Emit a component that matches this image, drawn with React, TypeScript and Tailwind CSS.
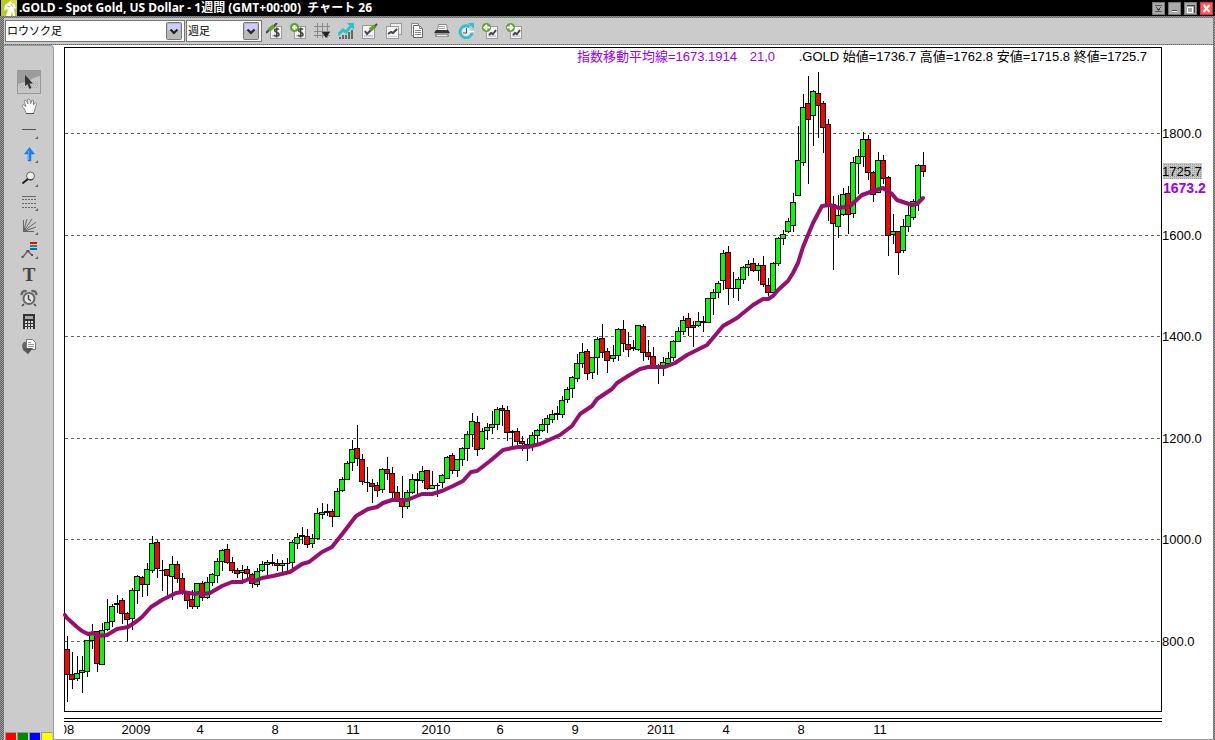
import type { ReactNode } from "react";

type Candle = [high: number, top: number, bottom: number, low: number, kind: "u" | "d"];

const FIRST_X = 67;
const STEP = 5;

// weekly candles, values are chart rows: high, body top, body bottom, low
const CANDLES: Candle[] = [
    [636, 649, 674, 701, "d"], [652, 674, 679, 688, "d"], [656, 673, 678, 680, "u"], [656, 670, 672, 692, "u"],
    [640, 640, 671, 676, "u"], [624, 632, 640, 648, "u"], [631, 631, 663, 671, "d"], [623, 630, 664, 664, "u"],
    [599, 622, 629, 630, "u"], [604, 606, 621, 626, "u"], [595, 603, 604, 612, "u"], [598, 600, 613, 623, "d"],
    [612, 613, 619, 640, "d"], [588, 590, 618, 629, "u"], [575, 576, 590, 603, "u"], [576, 577, 584, 596, "d"],
    [563, 569, 584, 595, "u"], [536, 543, 570, 572, "u"], [540, 542, 568, 577, "d"], [560, 570, 570, 590, "u"],
    [569, 569, 575, 596, "d"], [556, 564, 576, 599, "u"], [561, 564, 578, 582, "d"], [573, 578, 592, 594, "d"],
    [591, 593, 600, 608, "d"], [590, 599, 606, 608, "d"], [583, 583, 606, 608, "u"], [581, 583, 597, 600, "d"],
    [577, 582, 597, 598, "u"], [573, 574, 582, 585, "u"], [558, 561, 575, 582, "u"], [549, 550, 561, 570, "u"],
    [544, 549, 562, 563, "d"], [557, 562, 570, 572, "d"], [568, 570, 573, 577, "d"], [565, 570, 572, 583, "u"],
    [566, 569, 573, 579, "d"], [573, 574, 583, 587, "d"], [568, 571, 584, 586, "u"], [561, 564, 570, 571, "u"],
    [560, 562, 564, 576, "u"], [554, 562, 563, 565, "u"], [559, 563, 565, 570, "d"], [560, 563, 565, 572, "u"],
    [558, 563, 563, 571, "u"], [540, 542, 562, 569, "u"], [533, 537, 543, 548, "u"], [527, 535, 536, 543, "u"],
    [529, 536, 544, 547, "d"], [534, 538, 543, 547, "u"], [508, 513, 538, 539, "u"], [503, 512, 514, 518, "u"],
    [504, 511, 512, 515, "u"], [509, 511, 516, 526, "d"], [488, 491, 516, 516, "u"], [477, 479, 490, 491, "u"],
    [461, 463, 479, 479, "u"], [440, 449, 462, 470, "u"], [425, 448, 458, 465, "d"], [454, 459, 481, 484, "d"],
    [467, 482, 482, 491, "u"], [479, 483, 486, 502, "d"], [482, 485, 490, 496, "d"], [468, 469, 489, 492, "u"],
    [457, 469, 473, 479, "d"], [467, 473, 492, 497, "d"], [486, 492, 501, 501, "d"], [476, 500, 506, 517, "d"],
    [490, 492, 506, 508, "u"], [474, 479, 492, 493, "u"], [473, 479, 480, 494, "u"], [466, 471, 480, 482, "u"],
    [470, 470, 488, 489, "d"], [471, 485, 488, 488, "u"], [483, 485, 485, 496, "u"], [474, 475, 482, 487, "u"],
    [456, 457, 478, 478, "u"], [453, 455, 470, 473, "d"], [459, 459, 470, 476, "u"], [447, 448, 459, 465, "u"],
    [431, 434, 448, 460, "u"], [413, 421, 434, 446, "u"], [416, 422, 449, 455, "d"], [428, 431, 448, 449, "u"],
    [423, 427, 430, 439, "u"], [411, 424, 427, 433, "u"], [407, 409, 424, 429, "u"], [405, 408, 410, 425, "d"],
    [406, 410, 432, 440, "d"], [430, 431, 432, 446, "u"], [428, 431, 441, 445, "d"], [436, 441, 443, 450, "d"],
    [439, 444, 445, 460, "u"], [432, 435, 445, 450, "u"], [429, 430, 435, 444, "u"], [419, 424, 430, 431, "u"],
    [415, 418, 424, 432, "u"], [410, 414, 419, 422, "u"], [406, 413, 414, 419, "u"], [396, 400, 414, 417, "u"],
    [387, 389, 399, 402, "u"], [376, 377, 388, 397, "u"], [354, 363, 378, 381, "u"], [343, 352, 363, 367, "u"],
    [349, 351, 373, 379, "d"], [357, 357, 372, 378, "u"], [337, 339, 357, 374, "u"], [324, 338, 352, 357, "d"],
    [348, 351, 360, 372, "d"], [345, 355, 358, 361, "u"], [328, 329, 355, 360, "u"], [320, 329, 343, 351, "d"],
    [332, 344, 349, 356, "d"], [340, 347, 348, 350, "u"], [325, 325, 349, 350, "u"], [324, 326, 352, 360, "d"],
    [340, 352, 356, 359, "d"], [347, 356, 366, 366, "d"], [364, 365, 366, 383, "u"], [357, 362, 365, 375, "u"],
    [352, 358, 363, 364, "u"], [340, 341, 357, 360, "u"], [327, 331, 341, 341, "u"], [316, 320, 331, 334, "u"],
    [313, 318, 327, 335, "d"], [321, 325, 327, 346, "d"], [312, 321, 325, 326, "u"], [316, 321, 322, 331, "u"],
    [298, 298, 322, 322, "u"], [289, 292, 298, 314, "u"], [281, 283, 292, 297, "u"], [250, 253, 280, 289, "u"],
    [246, 252, 288, 304, "d"], [272, 288, 288, 297, "u"], [277, 279, 288, 300, "u"], [266, 267, 279, 283, "u"],
    [260, 264, 267, 275, "u"], [258, 263, 270, 271, "d"], [263, 265, 270, 280, "u"], [256, 265, 284, 286, "d"],
    [278, 285, 292, 295, "d"], [262, 263, 292, 292, "u"], [237, 238, 263, 265, "u"], [230, 234, 238, 244, "u"],
    [218, 221, 231, 232, "u"], [193, 202, 225, 231, "u"], [126, 160, 195, 195, "u"], [94, 107, 162, 165, "u"],
    [76, 103, 119, 183, "d"], [90, 91, 115, 145, "u"], [72, 93, 105, 137, "d"], [101, 103, 127, 152, "d"],
    [119, 124, 204, 220, "d"], [196, 204, 223, 269, "d"], [195, 215, 226, 237, "u"], [188, 194, 214, 215, "u"],
    [186, 193, 214, 233, "d"], [157, 162, 213, 217, "u"], [149, 156, 163, 193, "u"], [132, 139, 156, 166, "u"],
    [135, 139, 172, 179, "d"], [171, 172, 194, 201, "d"], [152, 160, 192, 192, "u"], [155, 160, 178, 183, "d"],
    [176, 177, 235, 255, "d"], [214, 231, 234, 243, "u"], [231, 231, 252, 274, "d"], [219, 226, 250, 252, "u"],
    [206, 215, 226, 231, "u"], [199, 201, 217, 219, "u"], [164, 165, 202, 210, "u"], [152, 165, 171, 176, "d"],
];

const EMA =
    "65,615 67,618 77,627 82,631 88,634 93,633 98,636 107,635 117,629 128,627 137,621 142,617 151,607 162,600 176,593 183,592 195,594 198,593 203,594 210,593 222,586 232,582 242,582 249,579 255,581 262,578 273,576 290,572 302,564 309,562 322,552 332,547 343,533 356,516 368,509 377,507 383,503 392,500 407,500 412,498 422,494 432,494 442,491 453,486 463,481 471,472 477,471 490,461 503,450 512,448 518,447 528,447 540,444 560,435 572,426 580,414 592,406 597,399 612,389 617,383 628,376 640,369 648,367 665,367 675,363 687,355 707,345 718,332 723,326 737,318 753,305 763,299 768,299 773,296 778,290 788,281 793,273 798,263 803,247 813,223 822,206 830,205 839,208 850,206 862,195 873,191 883,188 892,194 897,200 912,205 917,204 923,198";

const PRICES = [
    { label: "1800.0", y: 133 },
    { label: "1600.0", y: 235 },
    { label: "1400.0", y: 336 },
    { label: "1200.0", y: 438 },
    { label: "1000.0", y: 539 },
    { label: "800.0", y: 641 },
];

const DATES = [
    { label: "08", x: 67 },
    { label: "2009", x: 136 },
    { label: "4", x: 200 },
    { label: "8", x: 275 },
    { label: "11", x: 353 },
    { label: "2010", x: 436 },
    { label: "6", x: 500 },
    { label: "9", x: 575 },
    { label: "2011", x: 661 },
    { label: "4", x: 726 },
    { label: "8", x: 801 },
    { label: "11", x: 880 },
];

// the time scale skips one extra pixel after candle 108
const candleX = (i: number) => FIRST_X + i * STEP + (i > 108 ? 1 : 0);

const Chart = () => (
    <svg
        viewBox="54 45 1159 694"
        preserveAspectRatio="xMinYMin meet"
        className="block h-full w-full font-['Liberation_Sans','Noto_Sans_CJK_JP',sans-serif] text-[13px]"
        role="img"
        aria-label=".GOLD チャート"
    >
        <defs>
            <clipPath id="time-axis">
                <rect x="64" y="722" width="1098" height="18" />
            </clipPath>
            <pattern id="dither" width="2" height="2" patternUnits="userSpaceOnUse">
                <rect width="2" height="2" fill="#c8c8c8" />
                <rect width="1" height="1" fill="#999" />
            </pattern>
        </defs>

        <g shapeRendering="crispEdges" fill="none" stroke="#000">
            {PRICES.map(({ label, y }) => (
                <path key={label} d={`M65 ${y}.5H1161`} stroke="#666" strokeDasharray="3 3" />
            ))}
            <rect x="64.5" y="47.5" width="1097" height="664" />
            <path d="M64 718.5H1162M64 721.5H1162" />
            {CANDLES.map(([high, top, bottom, low, kind], i) => {
                const x = candleX(i);
                return (
                    <g key={i}>
                        <path d={`M${x}.5 ${high}V${low + 1}`} />
                        {bottom - top < 2 ? (
                            <rect x={x - 3} y={top} width="6" height={bottom - top + 1} fill="#000" stroke="none" />
                        ) : (
                            <rect
                                x={Math.max(x - 2.5, 64.5)}
                                y={top + 0.5}
                                width="5"
                                height={bottom - top}
                                fill={kind === "u" ? "#00ff00" : "#ff0000"}
                            />
                        )}
                    </g>
                );
            })}
        </g>

        <polyline
            points={EMA}
            fill="none"
            stroke="#990f70"
            strokeWidth="4"
            strokeLinejoin="round"
            strokeLinecap="round"
        />

        <g fill="#9900ff">
            <text x="577" y="61">
                指数移動平均線=1673.1914
            </text>
            <text x="775" y="61" textAnchor="end">
                21,0
            </text>
        </g>
        <text x="1147" y="61" textAnchor="end">
            .GOLD 始値=1736.7 高値=1762.8 安値=1715.8 終値=1725.7
        </text>

        {PRICES.map(({ label, y }) => (
            <text key={label} x="1162" y={y + 5}>
                {label}
            </text>
        ))}
        <rect x="1163" y="163" width="39" height="16" fill="url(#dither)" shapeRendering="crispEdges" />
        <text x="1162" y="176">
            1725.7
        </text>
        <text x="1163" y="193" fill="#9900ff" className="text-[14px] font-bold">
            1673.2
        </text>

        <g clipPath="url(#time-axis)" textAnchor="middle">
            {DATES.map(({ label, x }) => (
                <text key={x} x={x} y="734">
                    {label}
                </text>
            ))}
        </g>
    </svg>
);

const Logo = () => (
    <svg viewBox="0 0 16 16" className="size-4 shrink-0" aria-hidden="true">
        <rect width="16" height="16" fill="#b5cc1f" />
        <path d="M9 0h7v9z" fill="#d6da4a" />
        <path d="M3 9 4 5 7 3 9 1l2 2 3 2 1 4-2-1 1 8h-2l-1-5-1 5H5l2-6-2-1-1 2z" fill="#fff" />
        <path d="M10 4l2 3M6 6l3 1" stroke="#a8b860" fill="none" />
    </svg>
);

const WindowButton = ({ label, close, children }: { label: string; close?: boolean; children: ReactNode }) => (
    <button
        type="button"
        aria-label={label}
        className={close ? "size-[13px] bg-[#e83030]" : "size-[13px] bg-[#777]"}
    >
        <svg viewBox="0 0 13 13" className="block size-full" shapeRendering="crispEdges" fill="none" stroke="#fff">
            <rect x="1" y="1" width="11" height="11" fill={close ? "#ff5a5a" : "#aaa"} stroke="none" />
            {children}
        </svg>
    </button>
);

const TitleBar = () => (
    <header className="flex h-4 shrink-0 items-center bg-black pr-[2px] pl-px text-white">
        <Logo />
        <h1 className="flex-1 pl-[2px] font-['Noto_Sans','Noto_Sans_CJK_JP',sans-serif] text-[12px] leading-4 font-bold whitespace-pre">
            .GOLD - Spot Gold, US Dollar - 1週間 (GMT+00:00)  チャート 26
        </h1>
        <div className="flex gap-[3px]">
            <WindowButton label="折りたたむ">
                <path d="M3 3.5h7M3 9.5h7" stroke="#555" />
                <path d="M4 5l2.5 3L9 5" stroke="#444" />
            </WindowButton>
            <WindowButton label="最小化">
                <path d="M4 8.5h5" stroke="#444" />
                <path d="M4 9.5h5" />
            </WindowButton>
            <WindowButton label="最大化">
                <path d="M3 3.5h7v7" stroke="#444" />
                <path d="M3.5 5v5.5H8.5V5.5H3" />
            </WindowButton>
            <WindowButton label="閉じる" close>
                <path d="M3.5 3l6 7M9.5 3l-6 7" strokeWidth="2" shapeRendering="auto" />
            </WindowButton>
        </div>
    </header>
);

const Dropdown = ({ label, options, className }: { label: string; options: string[]; className: string }) => (
    <div className={`relative h-[22px] border border-[#777] bg-white ${className}`}>
        <select
            aria-label={label}
            className="block h-5 w-full appearance-none bg-transparent pl-px font-['Liberation_Sans','Noto_Sans_CJK_JP',sans-serif] text-[11px] leading-5 text-black"
        >
            {options.map((option) => (
                <option key={option}>{option}</option>
            ))}
        </select>
        <svg
            viewBox="0 0 16 18"
            className="pointer-events-none absolute top-px right-[2px] h-[18px] w-4"
            aria-hidden="true"
        >
            <rect x="0.5" y="0.5" width="15" height="17" rx="1" fill="#b9b9b9" stroke="#777" />
            <path d="M2 2h12v6H2z" fill="#ccccff" />
            <path d="M4.500 7.500 8 11l3.500-3.500" fill="none" stroke="#222" strokeWidth="2" />
        </svg>
    </div>
);

const Sheet = () => (
    <>
        <rect x="4.500" y="3.500" width="11" height="12" fill="#f4f4f4" stroke="#999" />
        <path d="M6 12h8v2H6z" fill="#c9cdf0" />
    </>
);

const Dollar = () => (
    <path
        d="M13 6.500C12 5.500 8.500 5.300 8.500 7.300S13 9.200 13 11.300 9 13.300 8 12M10.700 4.500v10"
        stroke="#444"
        strokeWidth="1.500"
    />
);

const TOOLS: { label: string; icon: ReactNode }[] = [
    {
        label: "銘柄編集",
        icon: (
            <>
                <Sheet />
                <Dollar />
                <path d="M0 10 3 7" stroke="#444" strokeWidth="2" />
                <path d="M3 7 8 3" stroke="#5aa52c" strokeWidth="4" />
                <path d="M8 3l3-3" stroke="#444" strokeWidth="2" />
            </>
        ),
    },
    {
        label: "銘柄追加",
        icon: (
            <>
                <Sheet />
                <Dollar />
                <circle cx="4.500" cy="4.500" r="4.500" fill="#5aa52c" />
                <path d="M4.500 2v5M2 4.500h5" stroke="#fff" strokeWidth="2" />
            </>
        ),
    },
    {
        label: "グリッド",
        icon: (
            <>
                <path d="M3.500 0v15M8.500 0v15M13.500 0v15M0 3.500h16M0 8.500h16M0 12.500h16" stroke="#888" />
                <path d="M8 9h8l-4 6z" fill="#222" stroke="none" />
            </>
        ),
    },
    {
        label: "インジケーター",
        icon: (
            <>
                <path d="M2 16v-2M5 16v-4M8 16v-4M11 16V9M14 16V7" stroke="#666" strokeWidth="2" />
                <path d="M0 12 5 7l3 2 5-6" stroke="#26c6cc" strokeWidth="3" />
                <path d="M9 0h7v7z" fill="#26c6cc" stroke="none" />
            </>
        ),
    },
    {
        label: "設定",
        icon: (
            <>
                <rect x="0.500" y="2.500" width="12" height="13" fill="#f4f4f4" stroke="#999" />
                <path d="M2 12h9v2H2z" fill="#c9cdf0" stroke="none" />
                <path d="m3 8 2 3 4-4" stroke="#444" strokeWidth="2" />
                <path d="m8 7 5-4" stroke="#5aa52c" strokeWidth="4" />
                <path d="m13 3 2-2" stroke="#444" strokeWidth="2" />
            </>
        ),
    },
    {
        label: "チャート複製",
        icon: (
            <>
                <rect x="4.500" y="0.500" width="11" height="11" fill="#eee" stroke="#999" />
                <rect x="0.500" y="3.500" width="12" height="12" fill="#f4f4f4" stroke="#999" />
                <path d="m2 11 3-2 2 1 4-4" stroke="#444" strokeWidth="2" />
                <path d="M2 13.500h9" stroke="#c9cdf0" />
            </>
        ),
    },
    {
        label: "コピー",
        icon: (
            <>
                <path d="M1.500.5h7v12h-7z" fill="#fff" stroke="#888" />
                <path d="M3.500 2.500h6l3 3v9h-9z" fill="#fff" stroke="#666" />
                <path d="M9.500 2.500v3h3M5 7.500h6M5 9.500h6M5 11.500h6" stroke="#888" />
            </>
        ),
    },
    {
        label: "印刷",
        icon: (
            <>
                <path d="M4.500 1.500h8l1 6h-10z" fill="#fff" stroke="#888" />
                <path d="M5 3.500h6M5 5.500h6" stroke="#aaa" />
                <path d="M2 7h12l2 3H0z" fill="#333" stroke="none" />
                <path d="M1 10h14v4H1z" fill="#999" stroke="none" />
                <path d="M3 12.500h10" stroke="#eee" />
            </>
        ),
    },
    {
        label: "更新",
        icon: (
            <>
                <circle cx="8" cy="9" r="5" fill="#e8ecf4" stroke="none" />
                <path d="M14 10A6 6 0 1 1 11.500 3.800" stroke="#26c6cc" strokeWidth="3" />
                <path d="M10 0h6v6z" fill="#26c6cc" stroke="none" />
                <path d="M8.500 5v5H5" stroke="#555" />
                <path d="M10 8.500h6" stroke="#fff" />
            </>
        ),
    },
    {
        label: "前へ",
        icon: (
            <>
                <Sheet />
                <path d="m7 12 2-2 2 1 3-4" stroke="#444" strokeWidth="2" />
                <circle cx="4.500" cy="4.500" r="4.500" fill="#5aa52c" stroke="none" />
                <path d="M8 4.500H3M5 2 2.500 4.500 5 7" stroke="#fff" strokeWidth="2" />
            </>
        ),
    },
    {
        label: "次へ",
        icon: (
            <>
                <Sheet />
                <path d="m7 12 2-2 2 1 3-4" stroke="#444" strokeWidth="2" />
                <circle cx="4.500" cy="4.500" r="4.500" fill="#5aa52c" stroke="none" />
                <path d="M1 4.500h5M4 2l2.500 2.500L4 7" stroke="#fff" strokeWidth="2" />
            </>
        ),
    },
];

const Toolbar = () => (
    <div className="flex h-[26px] shrink-0 items-center pl-px">
        <Dropdown label="チャート種類" options={["ロウソク足", "バー", "ライン"]} className="w-[180px]" />
        <Dropdown label="足種" options={["週足", "日足", "月足"]} className="ml-px w-[76px]" />
        <div className="flex">
            {TOOLS.map(({ label, icon }) => (
                <button key={label} type="button" aria-label={label} className="flex h-6 w-6 items-center justify-center">
                    <svg viewBox="0 0 16 16" className="size-4" fill="none">
                        {icon}
                    </svg>
                </button>
            ))}
        </div>
    </div>
);

const More = () => <path d="M21 18v3h-3z" fill="#666" stroke="none" />;

const DRAWING_TOOLS: { label: string; icon: ReactNode }[] = [
    {
        label: "選択",
        icon: (
            <>
                <rect x="0.500" y="0.500" width="23" height="23" fill="#c6c6c6" stroke="#999" />
                <path d="M1 1h22v5l-4 1-6 3-5 2-7 2z" fill="#9c9c9c" stroke="none" />
                <path d="M2 15.500h20M3 17.500h18M10 13.500h12M16 11.500h6" stroke="#aaa" strokeDasharray="1 1" />
                <path d="M8 5v11l2.500-2 2 5 2-1-2-4.500H16z" fill="#333" stroke="none" />
            </>
        ),
    },
    {
        label: "移動",
        icon: (
            <>
                <path
                    d="M9 19.500 8 16l-3-4 1-1.500 3 2L7 7l1-1 1.500 1 1.500 3-.5-4.500 1.500-.5L13 6l.5 4L15 6l1.500.5L16.500 11 18 8.500l1.500 1L18 15l-1.500 4.500z"
                    fill="#fff"
                    stroke="#888"
                />
                <path d="M9 19.500h8" stroke="#555" />
            </>
        ),
    },
    {
        label: "ライン",
        icon: (
            <>
                <path d="M5 11.500h14" stroke="#555" shapeRendering="crispEdges" />
                <More />
            </>
        ),
    },
    {
        label: "矢印",
        icon: (
            <>
                <path d="M12.500 5.500 17.500 12H14v7h-3v-7H7.500z" fill="#1681ff" stroke="#1670e0" strokeWidth="0.500" />
                <path d="M11.500 9v9" stroke="#59b5ff" />
                <More />
            </>
        ),
    },
    {
        label: "ズーム",
        icon: (
            <>
                <path d="m6 17 5-4" stroke="#222" strokeWidth="2" strokeLinecap="round" />
                <circle cx="13.500" cy="10" r="4" fill="#eee" stroke="#666" />
                <path d="M10 12a4 4 0 0 0 6 1" stroke="#222" />
                <More />
            </>
        ),
    },
    {
        label: "フィボナッチ",
        icon: (
            <>
                <g shapeRendering="crispEdges" stroke="#666">
                    <path d="M5 6.500h14" />
                    <path d="M5 9.500h14M5 13.500h14M5 17.500h14" strokeDasharray="2 1" />
                </g>
                <More />
            </>
        ),
    },
    {
        label: "ファン",
        icon: (
            <>
                <path d="M6.500 17.500V6M6.500 17.500 10 5M6.500 17.500 15 5M6.500 17.500 19 8M6.500 17.500 19 13M6.500 17.500H17" stroke="#666" />
                <path d="M6 13v5h5z" fill="#666" stroke="none" />
                <More />
            </>
        ),
    },
    {
        label: "波動",
        icon: (
            <>
                <path d="M13 4h7v2h-7z" fill="#f00" stroke="none" />
                <path d="M13 7h7v2h-7z" fill="#0c9a63" stroke="none" />
                <path d="M13 10h7v2h-7z" fill="#0b5fd8" stroke="none" />
                <path d="m6 19 4.500-6 4.500 4" stroke="#666" strokeWidth="1.500" />
                <path d="M4.500 18h2v2h-2zM9.500 12h3v2h-3zM14 16h2v2h-2z" fill="#555" stroke="none" />
                <More />
            </>
        ),
    },
    {
        label: "テキスト",
        icon: (
            <text
                x="12"
                y="19"
                textAnchor="middle"
                fill="#444"
                className="font-['Liberation_Serif',serif] text-[19px] font-bold"
            >
                T
            </text>
        ),
    },
    {
        label: "アラート",
        icon: (
            <>
                <path d="M5 9a3 3 0 0 1 4.500-3.500M19 9a3 3 0 0 0-4.500-3.500" stroke="#666" strokeWidth="2.500" />
                <circle cx="12" cy="12.500" r="5.500" fill="#e4e4e4" stroke="#666" strokeWidth="2" />
                <path d="M11.500 9v4l2.500 2M7 18l-2 2M17 18l2 2" stroke="#444" strokeWidth="1.500" />
            </>
        ),
    },
    {
        label: "電卓",
        icon: (
            <g shapeRendering="crispEdges">
                <path d="M6 4h12v15H6z" fill="#333" stroke="none" />
                <path d="M8 6h8v3H8z" fill="#aaa" stroke="none" />
                <path d="M8 11.500h9M8 14.500h9M8 17.500h9" stroke="#ddd" strokeWidth="2" strokeDasharray="2 1" />
            </g>
        ),
    },
    {
        label: "保存",
        icon: (
            <>
                <path d="M5 12q1-5 4-4v5h7l-5 7-5-4z" fill="#666" stroke="none" />
                <path d="M9.500 5.500h6l3 3v7h-9z" fill="#fff" stroke="#777" />
                <path d="M11 8.500h3M11 10.500h6M11 12.500h6" stroke="#999" />
                <path d="M6 14h10l-5 6z" fill="#555" stroke="none" />
            </>
        ),
    },
];

const Sidebar = () => (
    <nav className="flex w-[50px] shrink-0 flex-col justify-between rounded-tr-sm border-t border-r border-[#999] bg-[#cbcbcb]">
        <div className="flex flex-col items-start pt-6 pl-[13px]">
            {DRAWING_TOOLS.map(({ label, icon }) => (
                <button key={label} type="button" aria-label={label} className="size-6">
                    <svg viewBox="0 0 24 24" className="block size-6" fill="none">
                        {icon}
                    </svg>
                </button>
            ))}
        </div>
        <div className="flex gap-px pl-px">
            <button type="button" aria-label="赤" className="h-2 w-[11px] border-t border-l border-[#999] bg-[#ff0000]" />
            <button type="button" aria-label="緑" className="h-2 w-[11px] border-t border-l border-[#999] bg-[#008a00]" />
            <button type="button" aria-label="青" className="h-2 w-[11px] border-t border-l border-[#999] bg-[#0000ff]" />
            <button type="button" aria-label="黄" className="h-2 w-[11px] border-t border-l border-[#999] bg-[#ffff00]" />
        </div>
    </nav>
);

const App = () => (
    <div className="flex h-screen flex-col overflow-hidden bg-[repeating-conic-gradient(#666_0_25%,#999_0_50%)] bg-[length:2px_2px]">
        <TitleBar />
        <div className="flex min-h-0 flex-1 flex-col pt-[2px] pr-[2px] pl-1">
            <div className="mb-px bg-[#cbcbcb]">
                <Toolbar />
            </div>
            <div className="flex min-h-0 flex-1 bg-white">
                <Sidebar />
                <main className="min-w-0 flex-1 border-b border-[#999]">
                    <Chart />
                </main>
            </div>
        </div>
    </div>
);

export default App;
